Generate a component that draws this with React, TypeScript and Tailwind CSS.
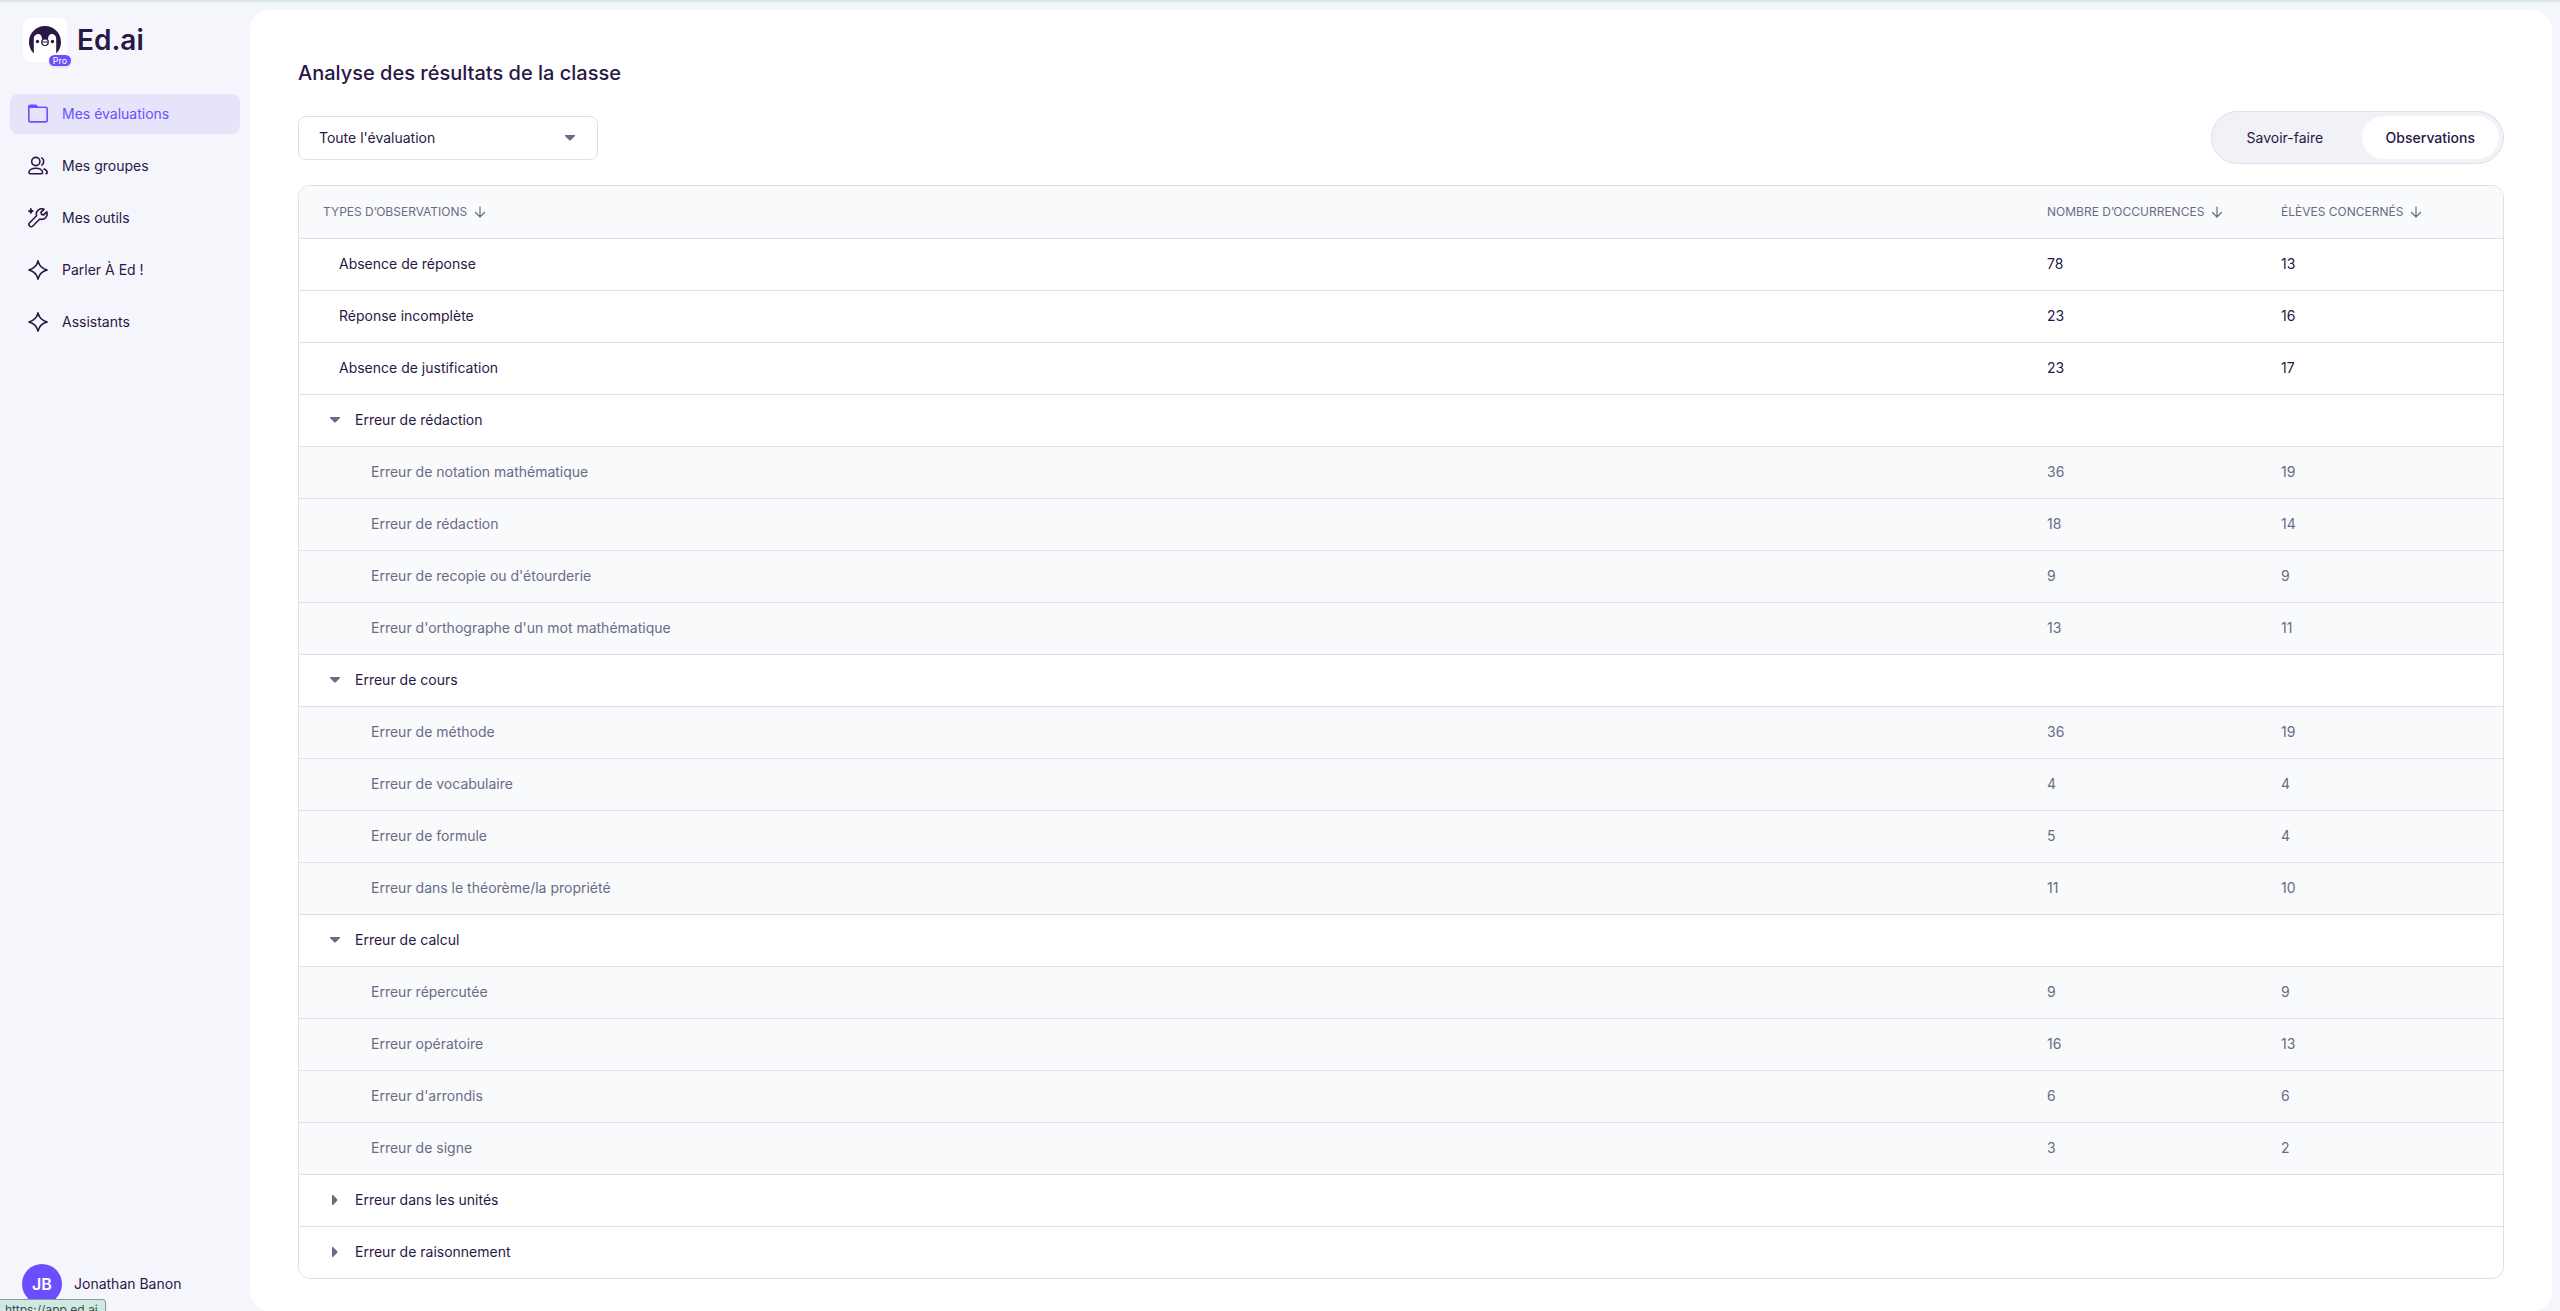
import { useState } from "react";
import type { ReactNode } from "react";

interface Observation {
  label: string;
  occurrences?: number;
  students?: number;
  open?: boolean;
  children?: Observation[];
}

const OBSERVATIONS: Observation[] = [
  { label: "Absence de réponse", occurrences: 78, students: 13 },
  { label: "Réponse incomplète", occurrences: 23, students: 16 },
  { label: "Absence de justification", occurrences: 23, students: 17 },
  {
    label: "Erreur de rédaction",
    open: true,
    children: [
      { label: "Erreur de notation mathématique", occurrences: 36, students: 19 },
      { label: "Erreur de rédaction", occurrences: 18, students: 14 },
      { label: "Erreur de recopie ou d'étourderie", occurrences: 9, students: 9 },
      { label: "Erreur d'orthographe d'un mot mathématique", occurrences: 13, students: 11 },
    ],
  },
  {
    label: "Erreur de cours",
    open: true,
    children: [
      { label: "Erreur de méthode", occurrences: 36, students: 19 },
      { label: "Erreur de vocabulaire", occurrences: 4, students: 4 },
      { label: "Erreur de formule", occurrences: 5, students: 4 },
      { label: "Erreur dans le théorème/la propriété", occurrences: 11, students: 10 },
    ],
  },
  {
    label: "Erreur de calcul",
    open: true,
    children: [
      { label: "Erreur répercutée", occurrences: 9, students: 9 },
      { label: "Erreur opératoire", occurrences: 16, students: 13 },
      { label: "Erreur d'arrondis", occurrences: 6, students: 6 },
      { label: "Erreur de signe", occurrences: 3, students: 2 },
    ],
  },
  { label: "Erreur dans les unités", children: [] },
  { label: "Erreur de raisonnement", children: [] },
];

function Icon({ children }: { children: ReactNode }) {
  return (
    <svg
      viewBox="0 0 20 20"
      className="size-5 shrink-0"
      fill="none"
      stroke="currentColor"
      strokeWidth="1.6"
      strokeLinecap="round"
      strokeLinejoin="round"
      aria-hidden="true"
    >
      {children}
    </svg>
  );
}

function FolderIcon() {
  return (
    <Icon>
      <path d="M.8 3.2v12.9c0 1 .8 1.8 1.8 1.8h14.8c1 0 1.8-.8 1.8-1.8V5c0-1-.8-1.8-1.8-1.8H.8" />
      <path d="M.8 3.2V2.8c0-1 .8-1.6 1.8-1.6H7c.8 0 1.400.3 1.700.9l.5 1.100z" fill="currentColor" />
    </Icon>
  );
}

function UsersIcon() {
  return (
    <Icon>
      <circle cx="7.8" cy="5.5" r="4.1" />
      <path d="M1 16.600c0-2.600 3-4.400 6.800-4.400s6.800 1.800 6.800 4.400c0 .7-.4 1.200-1.100 1.200H2.100c-.7 0-1.100-.5-1.100-1.200z" />
      <path d="M13.800 1.900c1.200.7 1.900 2 1.900 3.600s-.7 2.900-1.900 3.600" />
      <path d="M16 13c1.900.7 3.200 2 3.200 3.500 0 .7-.5 1.200-1.200 1.200" />
    </Icon>
  );
}

function ToolsIcon() {
  return (
    <Icon>
      <path d="M16 1.300a5.400 5.400 0 0 0-7.400 6.500L1.600 14.800a2.300 2.300 0 0 0 0 3.200 2.300 2.300 0 0 0 3.200 0l7-7a5.400 5.400 0 0 0 6.900-7.100l-3 3-2.200-.5-.5-2.200z" />
      <path d="M2.900.6l.8 1.700 1.700.8-1.700.8-.8 1.700-.8-1.700-1.700-.8 1.700-.8z" fill="currentColor" strokeWidth="1" />
    </Icon>
  );
}

function SparkleIcon() {
  return (
    <Icon>
      <path d="M10 .9c1.300 5.400 3.700 7.800 9.100 9.100-5.400 1.300-7.800 3.700-9.100 9.100-1.300-5.400-3.700-7.800-9.100-9.100C6.300 8.700 8.700 6.300 10 .9z" />
    </Icon>
  );
}

function PenguinLogo() {
  return (
    <svg viewBox="0 0 32 28" className="w-8" aria-hidden="true">
      <path
        d="M16 0C7 0 0 7 0 16c0 4.200 1.500 8.400 4.800 11.500V12.600C4.800 9.600 7.300 8 9.200 8c2 0 3.200 1.300 3.500 3.300L13 13h6l.3-1.700c.3-2 1.500-3.300 3.500-3.300 1.900 0 4.400 1.600 4.400 4.600v14.900C30.500 24.400 32 20.200 32 16 32 7 25 0 16 0z"
        fill="#2a1745"
      />
      <circle cx="8.5" cy="15.5" r="1.7" fill="#2a1745" />
      <circle cx="23.5" cy="15.5" r="1.7" fill="#2a1745" />
      <path
        d="M12.700 15.500c0-1.600 1.400-2.500 3.300-2.500s3.300.9 3.300 2.500c0 2.500-1.600 4-3.300 4s-3.300-1.500-3.300-4zM12.700 16h6.600"
        fill="#fff"
        stroke="#2a1745"
        strokeWidth="1.2"
      />
    </svg>
  );
}

function Caret({ open }: { open: boolean }) {
  return (
    <svg viewBox="0 0 10 10" className="size-[10px] shrink-0 text-[#696c86]" fill="currentColor" aria-hidden="true">
      <path d={open ? "M0 2h10v1L6 7q-1 1-2 0L0 3z" : "M2 0h1l4 4q1 1 0 2L3 10H2z"} />
    </svg>
  );
}

function SortArrow() {
  return (
    <svg
      viewBox="0 0 12 12"
      className="size-3 shrink-0"
      fill="none"
      stroke="currentColor"
      strokeWidth="1.2"
      strokeLinecap="round"
      strokeLinejoin="round"
      aria-hidden="true"
    >
      <path d="M6 1v10M1.500 6.500L6 11l4.500-4.500" />
    </svg>
  );
}

const NAV_ITEMS = [
  { label: "Mes évaluations", icon: <FolderIcon />, active: true },
  { label: "Mes groupes", icon: <UsersIcon /> },
  { label: "Mes outils", icon: <ToolsIcon /> },
  { label: "Parler À Ed !", icon: <SparkleIcon /> },
  { label: "Assistants", icon: <SparkleIcon /> },
];

function Sidebar() {
  return (
    <aside className="flex w-[250px] shrink-0 flex-col px-[10px] pt-4">
      <a href="#" className="flex items-center gap-[10px] pl-[13px]">
        <span className="relative flex size-11 items-center justify-center rounded-lg bg-white">
          <PenguinLogo />
          <span className="absolute -right-1 -bottom-1 flex h-[11px] w-[22px] items-center justify-center rounded-full bg-[#6b4eff] text-[9px] leading-none text-white shadow-sm">
            Pro
          </span>
        </span>
        <span className="text-[28px] leading-8 font-semibold">Ed.ai</span>
      </a>
      <nav className="mt-8 flex flex-col gap-3">
        {NAV_ITEMS.map((item) => (
          <a
            key={item.label}
            href="#"
            className={`flex h-10 items-center gap-[14px] rounded-lg px-[18px] text-sm ${
              item.active ? "bg-[#e6e4fa] text-[#6b4eff]" : ""
            }`}
          >
            {item.icon}
            {item.label}
          </a>
        ))}
      </nav>
      <button type="button" className="mt-auto mb-[7px] flex items-center gap-3 pl-3 text-sm">
        <span className="flex size-10 items-center justify-center rounded-full bg-[#6b4eff] text-base font-semibold text-white">
          JB
        </span>
        Jonathan Banon
      </button>
    </aside>
  );
}

function ViewToggle() {
  const [view, setView] = useState("Observations");

  return (
    <div className="grid grid-cols-2 gap-2 rounded-full border border-[#dfdeea] bg-[#f1f1f8] p-1">
      {["Savoir-faire", "Observations"].map((name) => (
        <button
          key={name}
          type="button"
          aria-pressed={view === name}
          onClick={() => setView(name)}
          className={`h-[43px] rounded-full px-6 text-sm ${view === name ? "bg-white font-medium" : ""}`}
        >
          {name}
        </button>
      ))}
    </div>
  );
}

function HeaderCell({ label, className }: { label: string; className: string }) {
  return (
    <th scope="col" className={`p-0 text-left font-normal ${className}`}>
      <button type="button" className="flex items-center gap-[7px] text-xs">
        {label}
        <SortArrow />
      </button>
    </th>
  );
}

function ObservationRows({ item }: { item: Observation }) {
  const [open, setOpen] = useState(item.open ?? false);

  return (
    <>
      <tr className="h-[52px] border-b border-[#dfdeea] last:border-b-0">
        <td className="p-0">
          {item.children ? (
            <button
              type="button"
              aria-expanded={open}
              onClick={() => setOpen(!open)}
              className="flex items-center gap-[15px] pl-[31px]"
            >
              <Caret open={open} />
              {item.label}
            </button>
          ) : (
            <span className="pl-10">{item.label}</span>
          )}
        </td>
        <td className="p-0">{item.occurrences}</td>
        <td className="p-0">{item.students}</td>
      </tr>
      {open &&
        item.children?.map((child) => (
          <tr key={child.label} className="h-[52px] border-b border-[#dfdeea] bg-[#f9fafc] text-[#696c86]">
            <td className="p-0 pl-[72px]">{child.label}</td>
            <td className="p-0">{child.occurrences}</td>
            <td className="p-0">{child.students}</td>
          </tr>
        ))}
    </>
  );
}

export default function App() {
  return (
    <div className="flex h-screen flex-col overflow-hidden border-t-2 border-[#dbe9e6] bg-[#f5f6fc] font-['Inter',sans-serif] text-[#2a1745]">
      <div className="flex min-h-0 grow">
        <Sidebar />
        <main className="mt-2 mr-2 grow rounded-[20px] bg-white px-12 pt-12">
          <h1 className="text-xl leading-[30px] font-medium">Analyse des résultats de la classe</h1>
          <div className="mt-[23px] flex items-center justify-between">
            <div className="relative w-[300px]">
              <select
                aria-label="Partie de l'évaluation"
                className="h-11 w-full appearance-none rounded-lg border border-[#dfdeea] bg-white px-5 text-sm"
              >
                <option>Toute l'évaluation</option>
              </select>
              <span className="pointer-events-none absolute inset-y-0 right-[23px] flex items-center">
                <Caret open />
              </span>
            </div>
            <ViewToggle />
          </div>
          <div className="mt-[21px] overflow-hidden rounded-xl border border-[#dfdeea]">
            <table className="w-full table-fixed border-collapse text-sm">
              <thead>
                <tr className="h-[52px] border-b border-[#dfdeea] bg-[#f9fafc] text-[#696c86]">
                  <HeaderCell label="TYPES D’OBSERVATIONS" className="pl-6" />
                  <HeaderCell label="NOMBRE D’OCCURRENCES" className="w-[234px]" />
                  <HeaderCell label="ÉLÈVES CONCERNÉS" className="w-[222px]" />
                </tr>
              </thead>
              <tbody>
                {OBSERVATIONS.map((item) => (
                  <ObservationRows key={item.label} item={item} />
                ))}
              </tbody>
            </table>
          </div>
        </main>
      </div>
      <div className="absolute bottom-0 left-0 h-3 overflow-hidden rounded-tr-[4px] border-t border-r border-[#8a9a97] bg-[#cfe9e2] pr-[7px] pl-[5px] text-xs leading-5 text-[#3c4f4b] shadow-md">
        https://app.ed.ai
      </div>
    </div>
  );
}
